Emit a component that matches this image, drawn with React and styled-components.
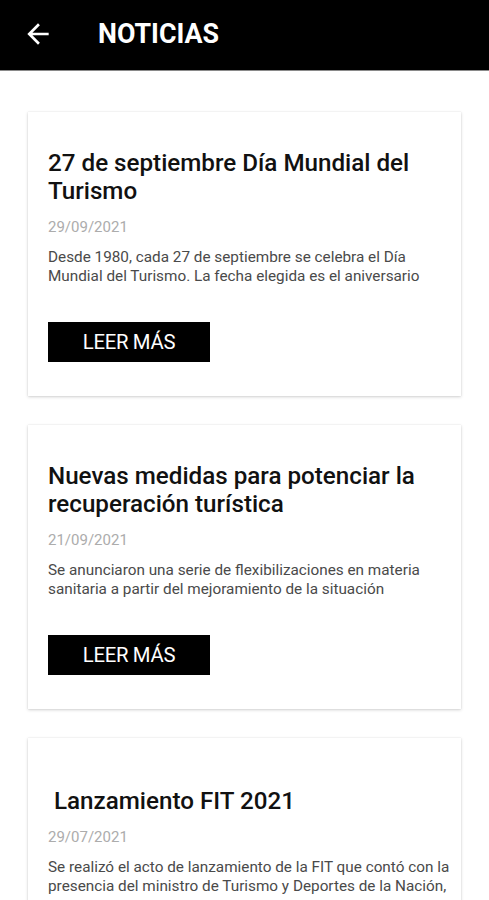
import React from 'react';
import styled, { createGlobalStyle } from 'styled-components';

const GlobalStyle = createGlobalStyle`
  body {
    margin: 0;
    background: #ffffff;
    font-family: Roboto, 'Liberation Sans', sans-serif;
  }
`;

const news = [
  {
    title: '27 de septiembre Día Mundial del Turismo',
    date: '29/09/2021',
    text: 'Desde 1980, cada 27 de septiembre se celebra el Día Mundial del Turismo. La fecha elegida es el aniversario',
    button: true,
  },
  {
    title: 'Nuevas medidas para potenciar la recuperación turística',
    date: '21/09/2021',
    text: 'Se anunciaron una serie de flexibilizaciones en materia sanitaria a partir del mejoramiento de la situación',
    button: true,
  },
  {
    title: '\u00a0Lanzamiento FIT 2021',
    date: '29/07/2021',
    text: 'Se realizó el acto de lanzamiento de la FIT que contó con la presencia del ministro de Turismo y Deportes de la Nación,',
    extraTop: true,
  },
];

const Page = styled.div`
  width: 489px;
  height: 900px;
  overflow: hidden;
  display: flex;
  flex-direction: column;
`;

const Header = styled.header`
  height: 70px;
  flex-shrink: 0;
  background: #000;
  border-bottom: 1px solid #8a8a8a;
  display: flex;
  align-items: center;
  padding-left: 22px;
`;

const BackButton = styled.div`
  width: 32px;
  height: 32px;
  display: flex;
  margin-top: -3px;
`;

const HeaderTitle = styled.h1`
  margin: -2px 0 0 44px;
  color: #fff;
  font-size: 26.8px;
  font-weight: 700;
`;

const List = styled.main`
  display: flex;
  flex-direction: column;
  gap: 29px;
  padding: 41px 28px 0 28px;
`;

const Card = styled.article`
  background: #fff;
  box-shadow: 0 1px 3px rgba(0, 0, 0, 0.18), 0 0 1px rgba(0, 0, 0, 0.12);
  padding: ${({ $extraTop }) => ($extraTop ? '49px' : '37px')} 10px 34px 20px;
`;

const Title = styled.h2`
  margin: 0;
  font-size: 24.2px;
  line-height: 28px;
  font-weight: 500;
  color: #111;
`;

const Date = styled.div`
  margin-top: 13px;
  font-size: 15px;
  line-height: 18px;
  color: #acacac;
`;

const Text = styled.p`
  margin: 12px 0 0 0;
  font-size: 15.3px;
  line-height: 19px;
  color: #4a4a4a;
`;

const ReadMore = styled.button`
  display: block;
  margin-top: 36px;
  width: 162px;
  height: 40px;
  padding: 0;
  border: none;
  background: #000;
  color: #fff;
  font-family: inherit;
  font-size: 20.3px;
  letter-spacing: -0.3px;
  cursor: pointer;
`;

const ArrowBack = () => (
  <svg width='32' height='32' viewBox='0 0 24 24' fill='#fff'>
    <path d='M20 11H7.83l5.59-5.59L12 4l-8 8 8 8 1.41-1.41L7.83 13H20v-2z' />
  </svg>
);

export default function App() {
  return (
    <Page>
      <GlobalStyle />
      <Header>
        <BackButton>
          <ArrowBack />
        </BackButton>
        <HeaderTitle>NOTICIAS</HeaderTitle>
      </Header>
      <List>
        {news.map((n) => (
          <Card key={n.date + n.title} $extraTop={n.extraTop}>
            <Title>{n.title}</Title>
            <Date>{n.date}</Date>
            <Text>{n.text}</Text>
            {n.button && <ReadMore>LEER MÁS</ReadMore>}
          </Card>
        ))}
      </List>
    </Page>
  );
}
